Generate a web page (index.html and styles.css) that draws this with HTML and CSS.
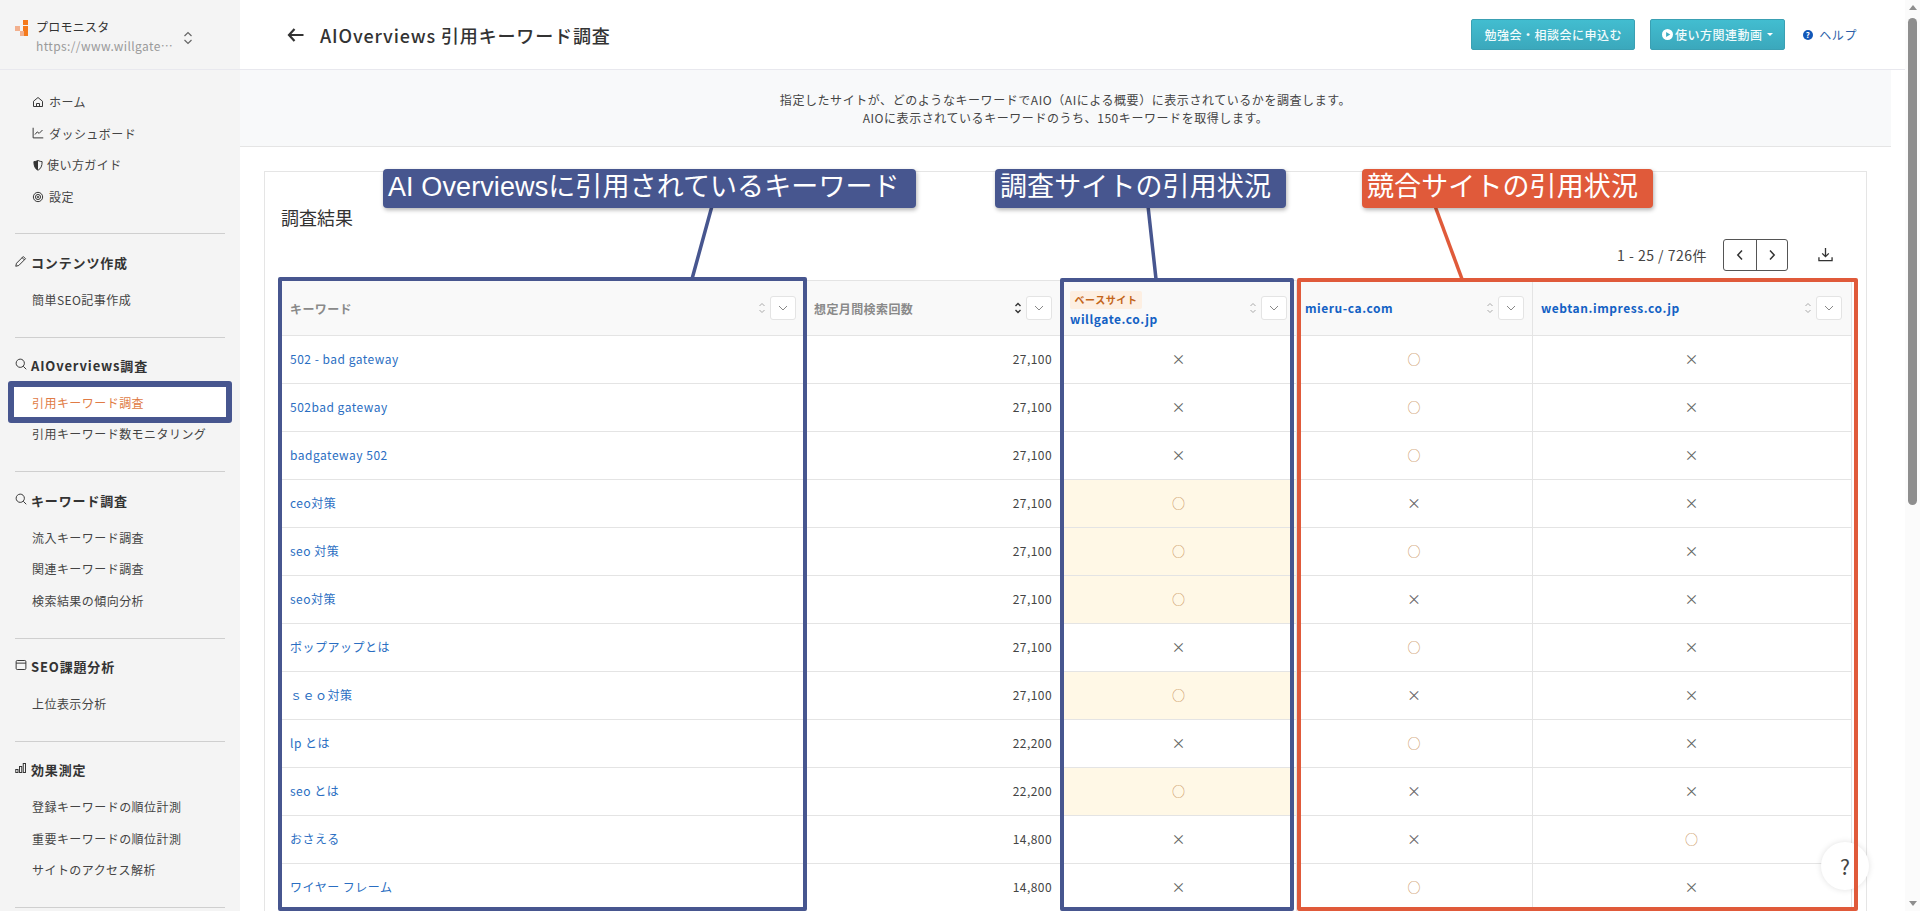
FILE: index.html
```html
<!DOCTYPE html>
<html lang="ja">
<head>
<meta charset="utf-8">
<title>AIOverviews 引用キーワード調査</title>
<link rel="stylesheet" href="styles.css">
</head>
<body>
<aside class="side">
  <div class="brand">
    <svg class="logo" viewBox="0 0 14 17" width="14" height="17"><rect x="8" y="0" width="5" height="5" fill="#f47a1c"/><rect x="0" y="6" width="5" height="5" fill="#f2b08e"/><rect x="8" y="6" width="5" height="5" fill="#f47a1c"/><rect x="5" y="11" width="4" height="5" fill="#f2b08e"/><rect x="9" y="11" width="4" height="5" fill="#f47a1c"/></svg>
    <div class="brand-text">
      <div class="brand-name">プロモニスタ</div>
      <div class="brand-url">https://www.willgate…</div>
    </div>
    <svg class="updown" viewBox="0 0 10 14" width="10" height="14"><path d="M1.500 5 5 1.500 8.500 5M1.500 9 5 12.500 8.500 9"/></svg>
  </div>
  <nav>
    <ul class="menu first">
      <li class="item"><svg class="ic" viewBox="0 0 16 16"><path d="M2 14V7l6-5 6 5v7zM6 14v-4h4v4"/></svg>ホーム</li>
      <li class="item"><svg class="ic" viewBox="0 0 16 16"><path d="M1.500 1v13.500H15M4 10l3-3.500 2.500 2L14 4"/></svg>ダッシュボード</li>
      <li class="item tight"><svg class="ic" viewBox="0 0 16 16"><path d="M8 2c2 1 4 1.500 5.500 1.500C13.500 9 12 13 8 15 4 13 2.500 9 2.500 3.500 4 3.500 6 3 8 2z"/><path class="solid" d="M8 2v13C4 13 2.500 9 2.500 3.500 4 3.500 6 3 8 2z"/></svg>使い方ガイド</li>
      <li class="item"><svg class="ic" viewBox="0 0 16 16"><circle cx="8" cy="8" r="6.200"/><circle cx="8" cy="8" r="3.400"/><circle cx="8" cy="8" r="1"/></svg>設定</li>
    </ul>
    <section class="group">
      <h3 class="head"><svg class="ic" viewBox="0 0 16 16"><path d="M11 2l3 3-9 9-4 1 1-4zM9.500 3.500l3 3"/></svg>コンテンツ作成</h3>
      <ul class="menu"><li class="item">簡単SEO記事作成</li></ul>
    </section>
    <section class="group">
      <h3 class="head"><svg class="ic" viewBox="0 0 16 16"><circle cx="7" cy="7" r="5.500"/><path d="M11 11l4 4"/></svg>AIOverviews調査</h3>
      <ul class="menu"><li class="item active">引用キーワード調査</li><li class="item">引用キーワード数モニタリング</li></ul>
    </section>
    <section class="group">
      <h3 class="head"><svg class="ic" viewBox="0 0 16 16"><circle cx="7" cy="7" r="5.500"/><path d="M11 11l4 4"/></svg>キーワード調査</h3>
      <ul class="menu"><li class="item">流入キーワード調査</li><li class="item">関連キーワード調査</li><li class="item">検索結果の傾向分析</li></ul>
    </section>
    <section class="group">
      <h3 class="head"><svg class="ic" viewBox="0 0 16 16"><rect x="1.500" y="2" width="13" height="12" rx="1.500"/><path d="M1.500 5.500h13"/></svg>SEO課題分析</h3>
      <ul class="menu"><li class="item">上位表示分析</li></ul>
    </section>
    <section class="group">
      <h3 class="head"><svg class="ic" viewBox="0 0 16 16"><rect x="1" y="10" width="3" height="4"/><rect x="6" y="6" width="3" height="8"/><rect x="11" y="2" width="3" height="12"/></svg>効果測定</h3>
      <ul class="menu"><li class="item">登録キーワードの順位計測</li><li class="item">重要キーワードの順位計測</li><li class="item">サイトのアクセス解析</li></ul>
    </section>
    <div class="rule"></div>
  </nav>
</aside>

<main class="main">
  <header class="top">
    <svg class="back" viewBox="0 0 16 14" width="16" height="14"><path d="M7 1 1.500 7 7 13M2 7h14"/></svg>
    <h1 class="title">AIOverviews 引用キーワード調査</h1>
    <div class="actions">
      <button class="btn btn-a">勉強会・相談会に申込む</button>
      <button class="btn btn-b"><svg viewBox="0 0 12 12" width="11" height="11"><circle cx="6" cy="6" r="6" fill="#fff"/><path d="M4.500 3.200 9 6l-4.500 2.800z" fill="#3faec2"/></svg>使い方関連動画<span class="caret"></span></button>
      <a class="help"><span class="help-mark">?</span>ヘルプ</a>
    </div>
  </header>
  <div class="intro">
    <p>指定したサイトが、どのようなキーワードでAIO（AIによる概要）に表示されているかを調査します。</p>
    <p>AIOに表示されているキーワードのうち、150キーワードを取得します。</p>
  </div>
  <section class="card">
    <h2 class="card-title">調査結果</h2>
    <div class="tools">
      <span class="count">1 - 25 / 726件</span>
      <div class="pager">
        <span class="page"><svg viewBox="0 0 8 12" width="8" height="12"><path d="M6 1.500 1.800 6 6 10.500"/></svg></span>
        <span class="page"><svg viewBox="0 0 8 12" width="8" height="12"><path d="M2 1.500 6.200 6 2 10.500"/></svg></span>
      </div>
      <svg class="dl" viewBox="0 0 16 16" width="15" height="15"><path d="M8 1v9M4.500 6.800 8 10.300l3.500-3.500M1 11v3.500h14V11"/></svg>
    </div>
    <table class="grid">
      <colgroup><col class="c1"><col class="c2"><col class="c3"><col class="c4"><col class="c5"></colgroup>
      <thead>
        <tr>
          <th><div class="th"><span class="th-label">キーワード</span><svg class="sort" viewBox="0 0 8 14"><path d="M1.500 5 4 2.500 6.500 5M1.500 9 4 11.500 6.500 9"/></svg><span class="filter"><svg viewBox="0 0 10 6"><path d="M1 1l4 4 4-4"/></svg></span></div></th>
          <th><div class="th"><span class="th-label">想定月間検索回数</span><svg class="sort on" viewBox="0 0 8 14"><path d="M1.500 5 4 2.500 6.500 5M1.500 9 4 11.500 6.500 9"/></svg><span class="filter"><svg viewBox="0 0 10 6"><path d="M1 1l4 4 4-4"/></svg></span></div></th>
          <th><div class="th"><div class="th-label"><span class="badge">ベースサイト</span><a class="site">willgate.co.jp</a></div><svg class="sort" viewBox="0 0 8 14"><path d="M1.500 5 4 2.500 6.500 5M1.500 9 4 11.500 6.500 9"/></svg><span class="filter"><svg viewBox="0 0 10 6"><path d="M1 1l4 4 4-4"/></svg></span></div></th>
          <th class="tight-r"><div class="th"><a class="site th-label">mieru-ca.com</a><svg class="sort" viewBox="0 0 8 14"><path d="M1.500 5 4 2.500 6.500 5M1.500 9 4 11.500 6.500 9"/></svg><span class="filter"><svg viewBox="0 0 10 6"><path d="M1 1l4 4 4-4"/></svg></span></div></th>
          <th><div class="th"><a class="site th-label">webtan.impress.co.jp</a><svg class="sort" viewBox="0 0 8 14"><path d="M1.500 5 4 2.500 6.500 5M1.500 9 4 11.500 6.500 9"/></svg><span class="filter"><svg viewBox="0 0 10 6"><path d="M1 1l4 4 4-4"/></svg></span></div></th>
        </tr>
      </thead>
      <tbody>
        <tr><td class="kw">502 - bad gateway</td><td class="num">27,100</td><td class="no">×</td><td class="yes">○</td><td class="no">×</td></tr>
        <tr><td class="kw">502bad gateway</td><td class="num">27,100</td><td class="no">×</td><td class="yes">○</td><td class="no">×</td></tr>
        <tr><td class="kw">badgateway 502</td><td class="num">27,100</td><td class="no">×</td><td class="yes">○</td><td class="no">×</td></tr>
        <tr><td class="kw">ceo対策</td><td class="num">27,100</td><td class="yes hit">○</td><td class="no">×</td><td class="no">×</td></tr>
        <tr><td class="kw">seo 対策</td><td class="num">27,100</td><td class="yes hit">○</td><td class="yes">○</td><td class="no">×</td></tr>
        <tr><td class="kw">seo対策</td><td class="num">27,100</td><td class="yes hit">○</td><td class="no">×</td><td class="no">×</td></tr>
        <tr><td class="kw">ポップアップとは</td><td class="num">27,100</td><td class="no">×</td><td class="yes">○</td><td class="no">×</td></tr>
        <tr><td class="kw">ｓｅｏ対策</td><td class="num">27,100</td><td class="yes hit">○</td><td class="no">×</td><td class="no">×</td></tr>
        <tr><td class="kw">lp とは</td><td class="num">22,200</td><td class="no">×</td><td class="yes">○</td><td class="no">×</td></tr>
        <tr><td class="kw">seo とは</td><td class="num">22,200</td><td class="yes hit">○</td><td class="no">×</td><td class="no">×</td></tr>
        <tr><td class="kw">おさえる</td><td class="num">14,800</td><td class="no">×</td><td class="no">×</td><td class="yes">○</td></tr>
        <tr><td class="kw">ワイヤー フレーム</td><td class="num">14,800</td><td class="no">×</td><td class="yes">○</td><td class="no">×</td></tr>
      </tbody>
    </table>
  </section>
</main>

<div class="scrollbar">
  <span class="arrow-up"></span>
  <span class="thumb"></span>
  <span class="arrow-down"></span>
</div>

<div class="float-help">?</div>

<svg class="leaders" viewBox="0 0 1920 911" width="1920" height="911">
  <path class="lead-blue" d="M712 206 692 279M1148 206 1156 279"/>
  <path class="lead-red" d="M1435 206 1462 279"/>
</svg>
<div class="mark mark-active"></div>
<div class="mark mark-kw"></div>
<div class="mark mark-base"></div>
<div class="mark mark-rival"></div>
<div class="note note-kw">AI Overviewsに引用されているキーワード</div>
<div class="note note-base">調査サイトの引用状況</div>
<div class="note note-rival">競合サイトの引用状況</div>
</body>
</html>
```

FILE: styles.css
```css
* { box-sizing: border-box; }
html, body { margin: 0; height: 911px; overflow: hidden; }
body {
  position: relative;
  display: flex;
  font-family: "Noto Sans CJK JP", "Noto Sans", sans-serif;
  color: #333;
  background: #fff;
  font-size: 12px;
}
ul { list-style: none; margin: 0; padding: 0; }
h1, h2, h3, p { margin: 0; }

/* sidebar */
.side { width: 240px; flex: none; background: #f4f4f4; height: 911px; overflow: hidden; }
.brand {
  height: 70px;
  border-bottom: 1px solid #e8e8ee;
  display: flex;
  align-items: center;
  padding: 2px 0 0 15px;
}
.logo { flex: none; margin: -14px 7px 0 0; }
.brand-text { width: 142px; }
.brand-name { font-size: 12px; letter-spacing: .25px; line-height: 19px; color: #333; }
.brand-url {
  font-size: 12px;
  letter-spacing: .38px;
  line-height: 19px;
  color: #9a9a9a;
  white-space: nowrap;
}
.updown { margin-left: 5px; margin-top: 4px; fill: none; stroke: #666; stroke-width: 1.200; }
.menu.first { padding: 16px 0 21px; }
.item {
  height: 31.6px;
  padding-left: 32px;
  display: flex;
  align-items: center;
  font-size: 12px;
  letter-spacing: .45px;
  color: #444;
  white-space: nowrap;
}
.item.active { margin: 0 14px; padding-left: 18px; background: #fff; color: #e07b45; }
.ic { width: 12px; height: 12px; flex: none; fill: none; stroke: #333; stroke-width: 1.300; }
.ic .solid { fill: #333; stroke: none; }
.item .ic { margin-right: 5px; }
.item.tight .ic { margin-right: 3px; }
.group { margin: 0 15px; padding: 18px 0 21.6px; border-top: 1px solid #cfcfcf; }
.group .item { margin-left: -15px; }
.group .item.active { margin: 0 -1px; padding-left: 18px; }
.head {
  height: 20px;
  margin-bottom: 11px;
  display: flex;
  align-items: center;
  font-size: 13px;
  font-weight: 700;
  letter-spacing: .85px;
  color: #333;
  white-space: nowrap;
}
.head .ic { margin: -3px 4px 0 0; }
.rule { margin: 0 15px; border-top: 1px solid #cfcfcf; }

/* main */
.main { width: 1665px; flex: none; height: 911px; overflow: hidden; }
.top {
  height: 70px;
  border-bottom: 1px solid #e8e8ee;
  display: flex;
  align-items: center;
  padding: 0 48px 0 47px;
}
.back { flex: none; width: 17px; fill: none; stroke: #333; stroke-width: 2.200; margin-right: 16px; }
.title { font-size: 18px; font-weight: 500; letter-spacing: .85px; color: #333; white-space: nowrap; }
.actions { margin-left: auto; display: flex; align-items: center; }
.btn {
  height: 31px;
  border: 1px solid #3aa0b3;
  border-radius: 2px;
  background: linear-gradient(#42bdd0, #3ba8bc);
  color: #f1fbfc;
  font: 500 12px "Noto Sans CJK JP", sans-serif;
  letter-spacing: .5px;
  display: flex;
  align-items: center;
  justify-content: center;
  padding: 0;
}
.btn-a { width: 164px; margin-right: 15px; }
.btn-b { width: 135px; margin-right: 18px; gap: 2px; }
.caret { width: 0; height: 0; margin-left: 3px; border: 3.500px solid transparent; border-top-color: #fff; border-bottom: 0; }
.help { color: #2c5fa8; letter-spacing: .6px; display: flex; align-items: center; font-size: 12px; }
.help-mark {
  width: 10px; height: 10px; border-radius: 50%; background: #1257b8; color: #fff;
  font-size: 8px; font-weight: 700; line-height: 10px; text-align: center; margin-right: 6px;
}
.intro {
  height: 77px;
  margin-right: 14px;
  background: #f8f9fa;
  border-bottom: 1px solid #e5e5e5;
  padding-top: 21px;
  text-align: center;
  font-size: 12px;
  letter-spacing: .56px;
  line-height: 18px;
  color: #444;
}
.card {
  margin: 24px 38px 0 24px;
  border: 1px solid #e5e5e5;
  padding: 32px 15px 0 16px;
}
.card-title { font-size: 18px; font-weight: 400; line-height: 26px; color: #333; }
.tools { height: 32px; margin: 9px 18px 9px 0; display: flex; align-items: center; justify-content: flex-end; }
.count { font-size: 14px; color: #444; letter-spacing: .5px; margin-right: 16px; }
.pager { display: flex; border: 1px solid #555; border-radius: 3px; height: 32px; }
.page { width: 31.500px; display: flex; align-items: center; justify-content: center; }
.page + .page { border-left: 1px solid #555; }
.page svg { fill: none; stroke: #333; stroke-width: 1.500; }
.dl { margin-left: 30px; margin-top: -2px; fill: none; stroke: #333; stroke-width: 1.400; }

/* table */
.grid { width: 1570px; table-layout: fixed; border-collapse: collapse; }
.c1 { width: 524px; }
.c2 { width: 256px; }
.c3 { width: 235px; }
.c4 { width: 236px; }
.c5 { width: 319px; }
.grid th {
  height: 55px;
  padding: 0 9px 0 8px;
  background: #f9f9f9;
  border: 1px solid #e4e4e4;
  font-weight: 700;
  text-align: left;
}
.grid th.tight-r { padding-right: 8px; }
.th { display: flex; align-items: center; }
.th-label { flex: 1; min-width: 0; font-size: 12px; color: #8a8a8a; letter-spacing: .4px; white-space: nowrap; }
.sort { width: 8px; height: 14px; flex: none; margin-right: 4px; fill: none; stroke: #aaa; stroke-width: 1; }
.sort.on { stroke: #333; stroke-width: 1.400; }
.filter {
  width: 26px; height: 24px; flex: none; background: #fff; border: 1px solid #e4e4e4; border-radius: 3px;
  display: flex; align-items: center; justify-content: center;
}
.filter svg { width: 10px; height: 6px; fill: none; stroke: #888; stroke-width: 1; }
.badge {
  display: block; width: 72px; height: 18px; margin-top: 3px; background: #fdefe2; color: #c4661a; border-radius: 2px;
  font-size: 10px; font-weight: 700; line-height: 18px; text-align: center; letter-spacing: .6px;
}
a.site { color: #1361c4; font-size: 12px; font-weight: 700; letter-spacing: .55px; }
.th-label a.site { display: block; line-height: 20px; }
a.site.th-label { padding-bottom: 2px; }
.grid td { height: 48px; padding: 0 9px 2px 8px; border: 1px solid #e4e4e4; font-size: 12px; font-weight: 400; }
.kw { color: #2a6ec2; letter-spacing: .5px; }
.num { text-align: right; color: #444; letter-spacing: .45px; }
.grid td.no { text-align: center; color: #666; font-size: 14px; padding-bottom: 3px; }
.grid td.yes { text-align: center; color: #c9935a; font-size: 13px; }
.grid td.hit { background: #fff8e6; }

/* fake browser scrollbar */
.scrollbar { width: 15px; flex: none; height: 911px; background: #fbfbfb; display: flex; flex-direction: column; align-items: center; }
.arrow-up { width: 0; height: 0; margin-top: 5px; border: 4.500px solid transparent; border-bottom: 5px solid #8e8e8e; border-top: 0; }
.thumb { width: 9px; height: 487px; margin-top: 8px; background: #8e8e8e; border-radius: 5px; }
.arrow-down { width: 0; height: 0; margin-top: auto; margin-bottom: 5px; border: 4.500px solid transparent; border-top: 5px solid #8e8e8e; border-bottom: 0; }

/* overlays */
.float-help {
  position: absolute; left: 1821px; top: 842px; width: 48px; height: 48px; border-radius: 50%;
  background: #fff; box-shadow: 0 0 6px rgba(0,0,0,.12);
  font-size: 21px; line-height: 48px; text-align: center; color: #444;
}
.leaders { position: absolute; left: 0; top: 0; pointer-events: none; }
.lead-blue { stroke: #47568f; stroke-width: 3.500; fill: none; }
.lead-red { stroke: #e05a3a; stroke-width: 3.500; fill: none; }
.mark { position: absolute; border: 4px solid #47568f; border-radius: 2px; }
.mark-active { left: 8px; top: 381px; width: 224px; height: 42px; border-width: 6px; border-radius: 3px; }
.mark-kw { left: 278px; top: 277px; width: 529px; height: 634px; }
.mark-base { left: 1060px; top: 278px; width: 234px; height: 633px; }
.mark-rival { left: 1297px; top: 278px; width: 561px; height: 633px; border-color: #e05a3a; }
.note {
  position: absolute; top: 169px; height: 39px; border-radius: 4px;
  background: #47568f; color: #fff; box-shadow: 1px 2px 4px rgba(0,0,0,.3);
  font-family: "Liberation Sans", "Noto Sans CJK JP", sans-serif; font-size: 27px; line-height: 36px;
  padding-left: 5px; letter-spacing: .1px; white-space: nowrap;
}
.note-kw { left: 383px; width: 533px; }
.note-base { left: 995px; width: 291px; }
.note-rival { left: 1362px; width: 291px; background: #e05a3a; }
```
